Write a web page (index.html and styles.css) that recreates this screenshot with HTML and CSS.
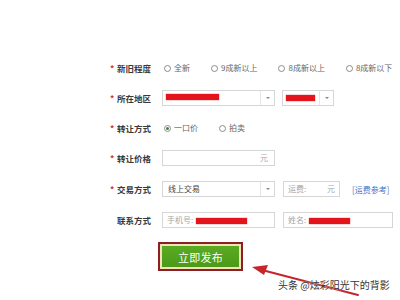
FILE: index.html
```html
<!DOCTYPE html>
<html lang="zh-CN">
<head>
<meta charset="utf-8">
<title>发布</title>
<link rel="stylesheet" href="styles.css">
</head>
<body>
<div class="page">
  <div class="form">
    <div class="row">
      <div class="label"><span class="req">*</span>新旧程度</div>
      <div class="radios">
        <span class="radio"><i class="circle"></i>全新</span>
        <span class="radio"><i class="circle"></i>9成新以上</span>
        <span class="radio"><i class="circle"></i>8成新以上</span>
        <span class="radio"><i class="circle"></i>8成新以下</span>
      </div>
    </div>
    <div class="row">
      <div class="label"><span class="req">*</span>所在地区</div>
      <div class="controls">
        <div class="select w-main"><span class="val"><span class="redact r1"></span></span><span class="caret"></span></div>
        <div class="select w-small"><span class="val"><span class="redact r2"></span></span><span class="caret"></span></div>
      </div>
    </div>
    <div class="row">
      <div class="label"><span class="req">*</span>转让方式</div>
      <div class="radios">
        <span class="radio"><i class="circle on"></i>一口价</span>
        <span class="radio"><i class="circle"></i>拍卖</span>
      </div>
    </div>
    <div class="row">
      <div class="label"><span class="req">*</span>转让价格</div>
      <div class="controls">
        <div class="input w-main price"><span class="unit">元</span></div>
      </div>
    </div>
    <div class="row shift">
      <div class="label"><span class="req">*</span>交易方式</div>
      <div class="controls">
        <div class="select w-main"><span class="val dark">线上交易</span><span class="caret"></span></div>
        <div class="input w-fee"><span class="ph">运费:</span><span class="unit">元</span></div>
        <a class="link">[运费参考]</a>
      </div>
    </div>
    <div class="row shift">
      <div class="label"><span class="req blank"></span>联系方式</div>
      <div class="controls">
        <div class="input w-main"><span class="ph">手机号:</span><span class="redact r3"></span></div>
        <div class="input w-name"><span class="ph">姓名:</span><span class="redact r4"></span></div>
      </div>
    </div>
    <div class="actions">
      <div class="submit-frame"><button class="submit">立即发布</button></div>
    </div>
  </div>
  <svg class="arrow" width="400" height="300" viewBox="0 0 400 300">
    <line x1="358" y1="295" x2="262" y2="270" stroke="#c4262b" stroke-width="2" stroke-linecap="round"/>
    <polygon points="252,267 268,265 264,275" fill="#c4262b"/>
  </svg>
  <div class="watermark">头条 @炫彩阳光下的背影</div>
</div>
</body>
</html>
```

FILE: styles.css
```css
* { box-sizing: border-box; }
html, body { margin: 0; padding: 0; background: #fff; }
body {
  font-family: "Noto Sans CJK SC", "Noto Sans", "Liberation Sans", sans-serif;
  color: #333;
}
.page { position: relative; width: 400px; height: 300px; overflow: hidden; }
.form { padding: 53px 0 0 108px; }
.row { display: flex; align-items: center; height: 30px; }
.row.shift { margin-top: 1px; }
.label {
  width: 54px;
  padding-left: 2px;
  font-size: 8.5px;
  font-weight: bold;
  color: #3a3a3a;
  white-space: nowrap;
  line-height: 1;
}
.req { display: inline-block; width: 7px; color: #d8262b; font-weight: bold; }
.radios { display: flex; align-items: center; gap: 21px; padding-left: 2px; }
.radio {
  display: flex; align-items: center; gap: 3px;
  font-size: 8px; color: #666; white-space: nowrap; line-height: 1;
}
.circle {
  display: inline-block; width: 7px; height: 7px;
  border: 1px solid #8c8c8c; border-radius: 50%;
  position: relative;
}
.circle.on::after {
  content: ""; position: absolute; left: 1px; top: 1px;
  width: 3px; height: 3px; border-radius: 50%; background: #3f7d3a;
}
.controls { display: flex; align-items: center; gap: 7px; }
.select, .input {
  height: 16px;
  border: 1px solid #d6d6d6;
  background: #fff;
  display: flex; align-items: center;
  font-size: 8px; color: #999; line-height: 1;
}
.w-main { width: 113px; }
.w-small { width: 52px; }
.w-fee { width: 57px; margin-left: 1px; }
.w-name { width: 110px; margin-left: 1px; }
.select .val { flex: 1; padding-left: 3px; display: flex; align-items: center; }
.select .val.dark { color: #444; padding-left: 5px; }
.caret {
  width: 14px; height: 100%;
  border-left: 1px solid #e6e6e6;
  display: flex; align-items: center; justify-content: center;
}
.caret::after {
  content: ""; width: 0; height: 0;
  border-left: 2px solid transparent; border-right: 2px solid transparent;
  border-top: 2px solid #888;
}
.input { padding: 0 4px; }
.input .ph { color: #a5a5a5; margin-right: 3px; }
.input .unit { margin-left: auto; color: #aaa; }
.price .unit { margin-right: 2px; }
.redact {
  display: inline-block; height: 6px; background: #e3141b;
  box-shadow: 0 0 1px #e3141b;
}
.r1 { width: 53px; margin-top: -3px; }
.r2 { width: 29px; }
.r3 { width: 51px; margin-top: 1px; }
.r4 { width: 41px; margin-top: 1px; }
.link { font-size: 8px; color: #4a74c4; margin-left: 5px; white-space: nowrap; }
.actions { margin: 7px 0 0 50px; }
.submit-frame {
  display: inline-block;
  border: 2px solid #8c1f22;
  padding: 2px;
  background: #f2e4b6;
}
.submit {
  display: block; width: 77px; height: 21px;
  border: 0; padding: 0; margin: 0;
  background: linear-gradient(#5bab22, #4b9a18);
  color: #fff; font-size: 11px; letter-spacing: 0.3px;
  font-family: "Noto Sans CJK SC", sans-serif;
}
.arrow { position: absolute; left: 0; top: 0; pointer-events: none; }
.watermark {
  position: absolute; left: 278px; top: 277px;
  font-size: 10px; color: #333; white-space: nowrap;
  text-shadow: 0 0 2px #fff;
}
```
